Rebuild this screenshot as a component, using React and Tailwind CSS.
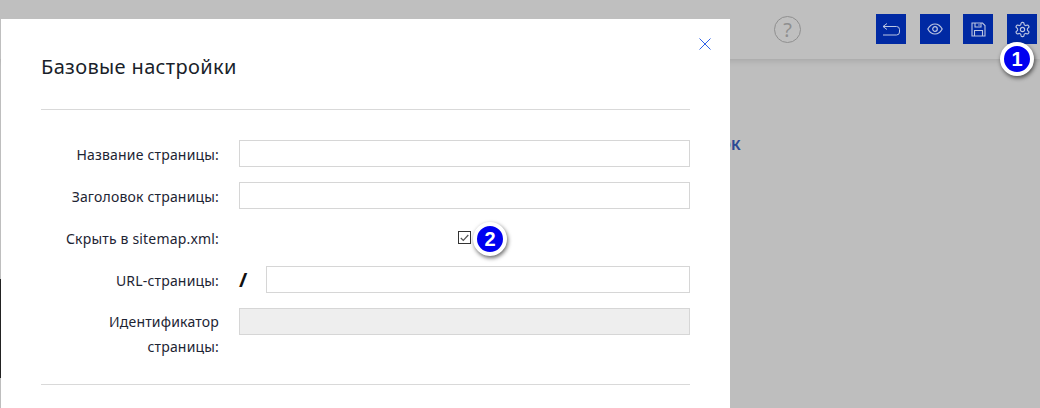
import React from "react";

function Badge({ n }) {
  return (
    <div className="flex h-[34px] w-[34px] items-center justify-center rounded-full bg-[#0000f0] border-[4px] border-white shadow-[1px_2px_4px_rgba(0,0,0,0.6)] text-white font-['Liberation_Sans',sans-serif] font-bold text-[20px] leading-none">
      {n}
    </div>
  );
}

function HeaderButton({ children, className = "" }) {
  return (
    <div className={"flex h-[30px] w-[30px] items-center justify-center bg-[#0029a3] text-[#bcc6e2] " + className}>
      {children}
    </div>
  );
}

function Label({ children, className = "pt-[2px]" }) {
  return (
    <div className={"w-[178px] shrink-0 text-right text-[14px] leading-[25px] tracking-[0.18px] text-[#1d2433] " + className}>
      {children}
    </div>
  );
}

function Field({ disabled }) {
  return (
    <div className={"h-[27px] flex-1 border border-[#d6d6d6] " + (disabled ? "bg-[#eeeeee]" : "bg-white")} />
  );
}

export default function App() {
  return (
    <div className="relative h-[408px] w-[1040px] overflow-hidden bg-[#bebebe] font-['Noto_Sans',sans-serif]">
      <header className="flex h-[59px] items-start justify-end gap-[14px] bg-[#bfbfbf] pr-[3px] pt-[14px] shadow-[0_2px_6px_rgba(0,0,0,0.12)]">
        <div className="mr-[61px] mt-[2px] flex h-[27px] w-[27px] items-center justify-center rounded-full border border-[#8f8f8f] text-[20px] leading-none text-[#8f8f8f]">
          ?
        </div>
        <HeaderButton>
          <svg width="18" height="13" viewBox="0 0 18 13" fill="none" stroke="currentColor" strokeWidth="1">
            <path d="M5 .5 1 3.500 5 6.500M1 3.500H14.500a3 3 0 0 1 3 3v2.500a3 3 0 0 1-3 3H1" />
          </svg>
        </HeaderButton>
        <HeaderButton className="mr-[-1px]">
          <svg width="16" height="12" viewBox="0 0 16 12" fill="none" stroke="currentColor" strokeWidth="1.2">
            <path d="M.8 6C2.600 2.700 5 1 8 1s5.400 1.700 7.200 5c-1.800 3.300-4.200 5-7.200 5S2.600 9.300.8 6Z" />
            <circle cx="8" cy="6" r="2.300" />
          </svg>
        </HeaderButton>
        <HeaderButton>
          <svg width="15" height="15" viewBox="0 0 15 15" fill="none" stroke="currentColor" strokeWidth="1.1">
            <path d="M1 1h10.500L14 3.500V14H1Z" />
            <path d="M4 1v4h6V1M8 2.200v1.600M3.500 14V8.500h8V14" />
          </svg>
        </HeaderButton>
        <HeaderButton>
          <svg width="17" height="17" viewBox="0 0 24 24" fill="none" stroke="currentColor" strokeWidth="1.6" strokeLinejoin="round">
            <path d="M12.220 2h-.44a2 2 0 0 0-2 2v.18a2 2 0 0 1-1 1.730l-.43.25a2 2 0 0 1-2 0l-.15-.08a2 2 0 0 0-2.730.73l-.22.38a2 2 0 0 0 .73 2.730l.15.1a2 2 0 0 1 1 1.720v.51a2 2 0 0 1-1 1.740l-.15.09a2 2 0 0 0-.73 2.730l.22.38a2 2 0 0 0 2.730.73l.15-.08a2 2 0 0 1 2 0l.43.25a2 2 0 0 1 1 1.730V20a2 2 0 0 0 2 2h.44a2 2 0 0 0 2-2v-.18a2 2 0 0 1 1-1.730l.43-.25a2 2 0 0 1 2 0l.15.08a2 2 0 0 0 2.730-.73l.22-.39a2 2 0 0 0-.73-2.730l-.15-.08a2 2 0 0 1-1-1.740v-.5a2 2 0 0 1 1-1.740l.15-.09a2 2 0 0 0 .73-2.730l-.22-.38a2 2 0 0 0-2.730-.73l-.15.08a2 2 0 0 1-2 0l-.43-.25a2 2 0 0 1-1-1.730V4a2 2 0 0 0-2-2Z" />
            <circle cx="12" cy="12" r="3" />
          </svg>
        </HeaderButton>
      </header>

      <div className="absolute left-[720px] top-[136px] text-[14px] font-bold leading-[17px] text-[#2c4a94]">ОК</div>
      <div className="absolute left-0 top-[279px] h-[99px] w-[1px] bg-[#222222]" />

      <div className="absolute left-[1px] top-[19px] h-[389px] w-[729px] bg-white px-[40px]">
        <button className="absolute right-[19px] top-[19px] text-[#2f62e8]">
          <svg width="12" height="12" viewBox="0 0 12 12" fill="none" stroke="currentColor" strokeWidth="1">
            <path d="M.5.5l11 11M11.500.5l-11 11" />
          </svg>
        </button>

        <h2 className="pt-[35px] text-[20px] font-normal leading-[26px] tracking-[0.35px] text-[#1a1f2b]">Базовые настройки</h2>
        <div className="mt-[29px] h-[1px] bg-[#d9d9d9]" />

        <div className="flex flex-col pt-[30px]">
          <div className="flex h-[27px] items-center">
            <Label>Название страницы:</Label>
            <div className="ml-[20px] flex flex-1"><Field /></div>
          </div>
          <div className="mt-[15px] flex h-[27px] items-center">
            <Label>Заголовок страницы:</Label>
            <div className="ml-[20px] flex flex-1"><Field /></div>
          </div>
          <div className="mt-[15px] flex h-[27px] items-center">
            <Label>Скрыть в sitemap.xml:</Label>
            <div className="relative ml-[20px] flex flex-1 items-center justify-center">
              <div className="flex h-[13px] w-[13px] items-center justify-center border border-[#333333] bg-white">
                <svg width="9" height="8" viewBox="0 0 9 8" fill="none" stroke="#555555" strokeWidth="1.2">
                  <path d="M.8 4l2.500 2.500L8.300 1" />
                </svg>
              </div>
              <div className="absolute left-[234px] top-[-9px]"><Badge n="2" /></div>
            </div>
          </div>
          <div className="mt-[15px] flex h-[27px] items-center">
            <Label>URL-страницы:</Label>
            <div className="ml-[20px] flex flex-1 items-center">
              <span className="w-[27px] text-[20px] font-bold leading-none text-[#111111]">/</span>
              <Field />
            </div>
          </div>
          <div className="mt-[15px] flex items-start">
            <Label className="pt-[1px] pb-[1px]">Идентификатор<br />страницы:</Label>
            <div className="ml-[20px] flex flex-1"><Field disabled /></div>
          </div>
        </div>

        <div className="mt-[24px] h-[1px] bg-[#d9d9d9]" />
      </div>

      <div className="absolute left-[1000px] top-[42px]"><Badge n="1" /></div>
    </div>
  );
}
